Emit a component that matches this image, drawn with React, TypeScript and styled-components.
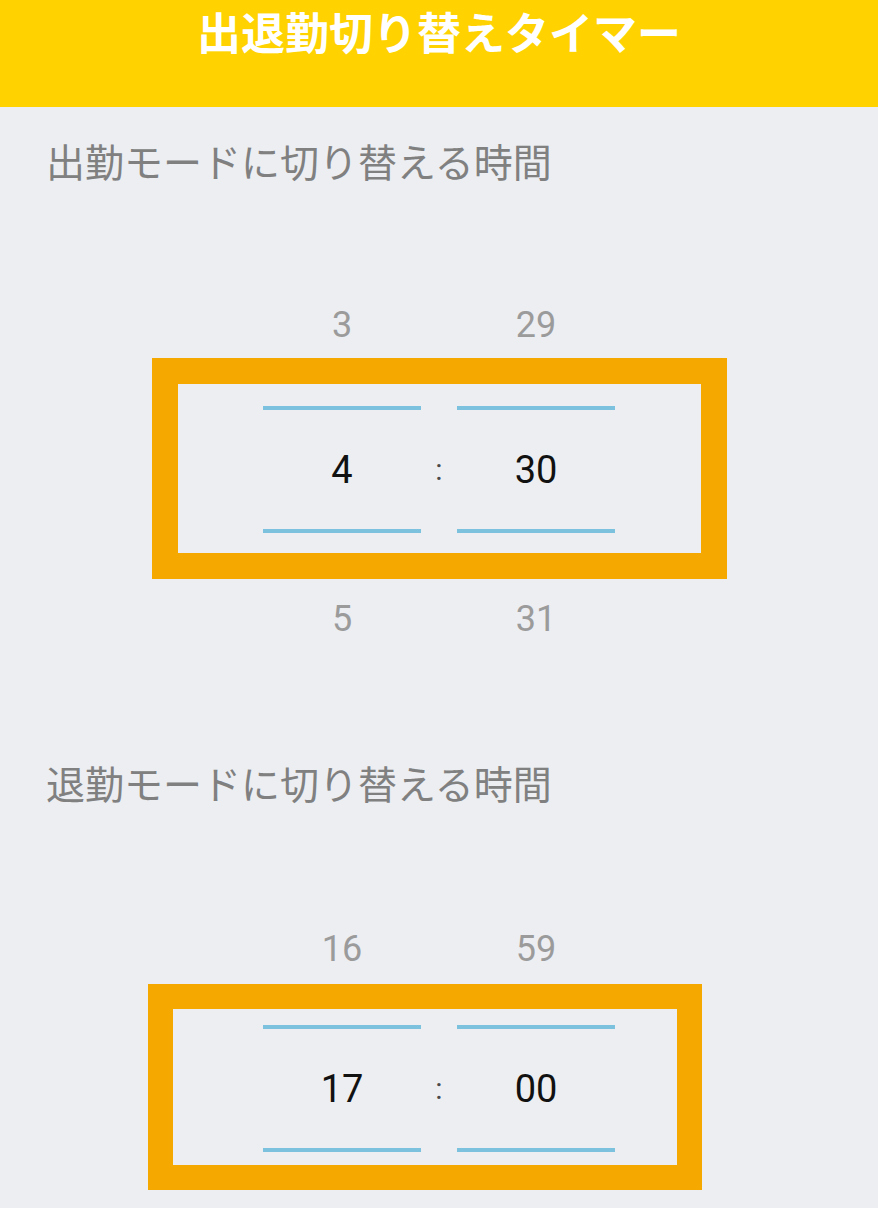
import styled, { createGlobalStyle } from 'styled-components';

const GlobalStyle = createGlobalStyle`
  html, body {
    margin: 0;
    padding: 0;
    background: #eceef2;
  }
  body {
    font-family: Roboto, "Noto Sans CJK JP", sans-serif;
  }
`;

type PickerData = {
  label: string;
  prev: [string, string];
  current: [string, string];
  next: [string, string];
  frame: { left: number; width: number; border: number; padTop: number; padBottom: number };
  topRow: number;
  bottomRow: number;
};

const pickers: PickerData[] = [
  {
    label: '出勤モードに切り替える時間',
    prev: ['3', '29'],
    current: ['4', '30'],
    next: ['5', '31'],
    frame: { left: 152, width: 575, border: 26, padTop: 22, padBottom: 20 },
    topRow: 66,
    bottomRow: 80,
  },
  {
    label: '退勤モードに切り替える時間',
    prev: ['16', '59'],
    current: ['17', '00'],
    next: ['', ''],
    frame: { left: 148, width: 554, border: 25, padTop: 16, padBottom: 13 },
    topRow: 70,
    bottomRow: 40,
  },
];

const COLUMNS_LEFT = 263;

export default function App() {
  return (
    <>
      <GlobalStyle />
      <Page>
        <Header>
          <Title>出退勤切り替えタイマー</Title>
        </Header>
        {pickers.map((p, i) => (
          <Section key={i} $first={i === 0}>
            <Label>{p.label}</Label>
            <Picker>
              <Columns $height={p.topRow} $left={COLUMNS_LEFT}>
                <Faded>{p.prev[0]}</Faded>
                <span />
                <Faded>{p.prev[1]}</Faded>
              </Columns>
              <Frame
                $left={p.frame.left}
                $width={p.frame.width}
                $border={p.frame.border}
                $padTop={p.frame.padTop}
                $padBottom={p.frame.padBottom}
                $inner={COLUMNS_LEFT - p.frame.left - p.frame.border}
              >
                <Lines>
                  <Line />
                  <span />
                  <Line />
                </Lines>
                <Columns $height={119} $left={0}>
                  <Selected>{p.current[0]}</Selected>
                  <Colon>:</Colon>
                  <Selected>{p.current[1]}</Selected>
                </Columns>
                <Lines>
                  <Line />
                  <span />
                  <Line />
                </Lines>
              </Frame>
              <Columns $height={p.bottomRow} $left={COLUMNS_LEFT}>
                <Faded>{p.next[0]}</Faded>
                <span />
                <Faded>{p.next[1]}</Faded>
              </Columns>
            </Picker>
          </Section>
        ))}
      </Page>
    </>
  );
}

const Page = styled.div`
  width: 878px;
  height: 1208px;
  overflow: hidden;
  background: #eceef2;
`;

const Header = styled.header`
  box-sizing: border-box;
  height: 107px;
  padding-top: 6px;
  background: #ffd200;
  display: flex;
  justify-content: center;
  align-items: flex-start;
`;

const Title = styled.h1`
  margin: 0;
  font-family: "Noto Sans CJK JP", sans-serif;
  font-size: 44px;
  font-weight: 700;
  line-height: 50px;
  color: #ffffff;
`;

const Section = styled.section<{ $first: boolean }>`
  display: flex;
  flex-direction: column;
  padding-top: ${p => (p.$first ? 28 : 98)}px;
`;

const Label = styled.div`
  padding-left: 46px;
  font-family: "Noto Sans CJK JP", sans-serif;
  font-size: 39px;
  line-height: 50px;
  color: #808080;
  margin-bottom: 107px;
`;

const Picker = styled.div`
  display: flex;
  flex-direction: column;
`;

const Columns = styled.div<{ $height: number; $left: number }>`
  display: grid;
  grid-template-columns: 158px 36px 158px;
  align-items: center;
  justify-items: center;
  height: ${p => p.$height}px;
  margin-left: ${p => p.$left}px;
  font-family: Roboto, sans-serif;
`;

const Faded = styled.span`
  font-size: 36px;
  color: #9b9b9b;
`;

const Selected = styled.span`
  font-size: 38px;
  color: #111111;
`;

const Colon = styled.span`
  font-size: 30px;
  color: #4a4a4a;
`;

const Frame = styled.div<{
  $left: number;
  $width: number;
  $border: number;
  $padTop: number;
  $padBottom: number;
  $inner: number;
}>`
  box-sizing: border-box;
  margin-left: ${p => p.$left}px;
  width: ${p => p.$width}px;
  border: ${p => p.$border}px solid #f5a900;
  padding: ${p => p.$padTop}px 0 ${p => p.$padBottom}px ${p => p.$inner}px;
  display: flex;
  flex-direction: column;
`;

const Lines = styled.div`
  display: grid;
  grid-template-columns: 158px 36px 158px;
  height: 4px;
`;

const Line = styled.div`
  background: #7cc2df;
`;
